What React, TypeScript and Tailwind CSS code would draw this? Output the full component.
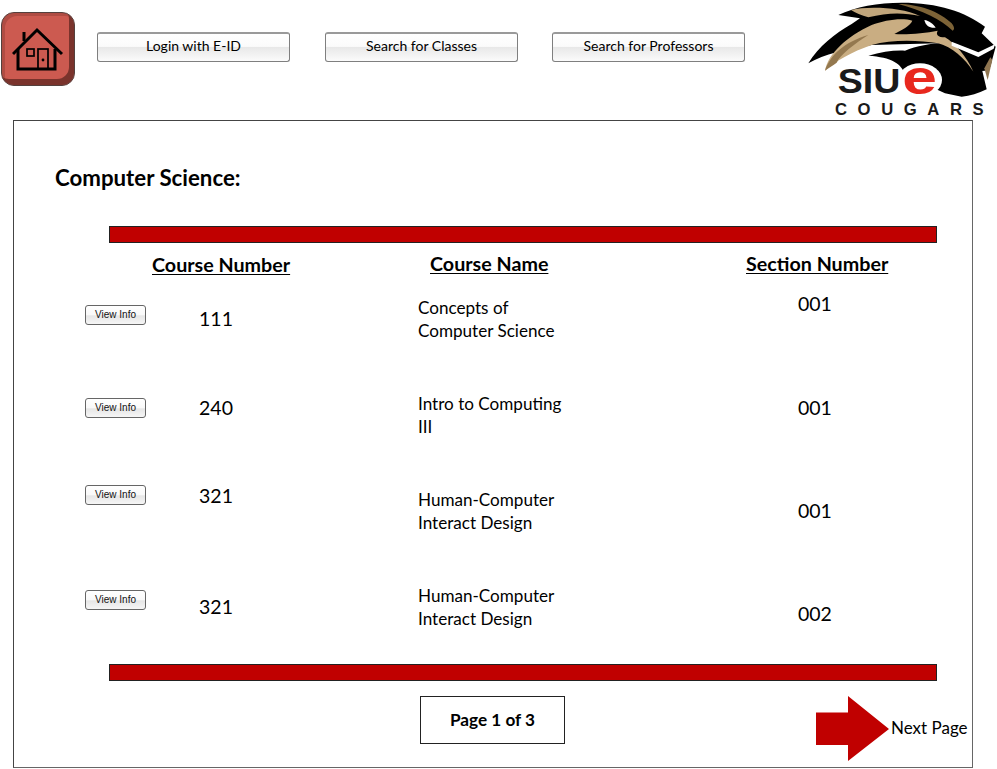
const font = { fontFamily: '"Lato", "Open Sans", sans-serif' };

function Chrome({ label, className = '' }: { label: string; className?: string }) {
  return (
    <button className={`w-[193px] h-[30px] shrink-0 rounded-[3px] border border-[#7f7f7f] border-t-2 border-t-[#9a9a9a] bg-[linear-gradient(#ffffff_0%,#fbfbfb_46%,#e8e8e8_50%,#fbfbfb_100%)] text-[14px] leading-[24px] pb-[4px] text-black ${className}`}>
      {label}
    </button>
  );
}

function HomeButton() {
  return (
    <div className="ml-px mt-3 w-[74px] h-[74px] shrink-0 rounded-[13px] border border-[#54403d] bg-[#cc5a50] shadow-[inset_-5px_-6px_0_#7a332c,inset_3px_3px_0_#b04c43]">
      <svg width="52" height="46" viewBox="0 0 52 46" fill="none" stroke="#000" className="block ml-[10px] mt-[13px]">
        <path d="M1 28 L25 4 L50 28" strokeWidth="3" />
        <path d="M6 23 V43 H43 V23" strokeWidth="3" />
        <path d="M12 15 V6" strokeWidth="3" />
        <rect x="15" y="23" width="7" height="7" strokeWidth="1.7" />
        <rect x="26" y="23" width="10" height="20" strokeWidth="1.7" />
        <circle cx="31" cy="34" r="1.4" fill="#000" stroke="none" />
      </svg>
    </div>
  );
}

function Logo() {
  return (
    <svg width="192" height="120" viewBox="0 0 576 360" className="ml-auto shrink-0">
      <path d="M10 190 C40 140 90 100 140 72 L165 55 L100 45 C150 20 220 8 290 8 C400 8 480 35 540 80 L530 100 L572 140 L556 200 L540 212 L500 215 C470 170 440 130 400 130 L200 135 C120 150 60 160 10 190 Z" fill="#000" />
      <path d="M190 167 C230 155 270 150 300 152 C340 135 400 125 440 130 L500 200 L530 205 L545 268 C520 280 495 288 470 290 L420 280 L300 225 C290 190 260 172 190 167 Z" fill="#000" />
      <path d="M138 30 C190 18 290 22 345 48 C300 38 250 36 190 52 C170 46 150 38 138 30 Z" fill="#c1a67c" />
      <path d="M280 12 C340 12 405 35 440 70 C450 82 448 90 443 92 C410 60 350 30 280 12 Z" fill="#7d6337" />
      <path d="M60 212 C70 160 125 110 200 75 C240 60 290 52 322 62 C315 78 290 90 268 102 C310 104 360 100 398 92 C392 104 398 112 420 112 C450 130 485 170 505 215 C480 175 440 140 400 130 C340 120 260 118 200 135 C140 155 90 185 60 212 Z" fill="#c9ad82" />
      <path d="M60 212 C75 165 120 125 190 105 C150 130 105 165 95 188 C85 195 70 205 60 212 Z" fill="#94784f" />
      <path d="M358 60 C372 62 385 72 392 83 C375 85 362 78 358 60 Z" fill="#fff" />
      <path d="M440 125 L520 157 L570 133 L566 146 L520 171 L440 137 Z" fill="#fff" />
      <path d="M556 172 L562 180 L548 240 L538 205 Z" fill="#8f7550" />
      <ellipse cx="345" cy="240" rx="66" ry="50" fill="#fff" />
      <text x="98" y="280" fontFamily="'Liberation Sans', sans-serif" fontWeight="700" fontSize="106" textLength="188" lengthAdjust="spacingAndGlyphs" fill="#1a1a1a">SIU</text>
      <text x="292" y="282" fontFamily="'Liberation Sans', sans-serif" fontWeight="700" fontSize="142" textLength="104" lengthAdjust="spacingAndGlyphs" fill="#e8281e">e</text>
      <text x="90" y="345" fontFamily="'Liberation Sans', sans-serif" fontWeight="700" fontSize="50" textLength="446" fill="#1a1a1a">COUGARS</text>
    </svg>
  );
}

function ViewInfo({ className }: { className: string }) {
  return (
    <button className={`w-[61px] h-[20px] rounded-[3px] border border-[#666] bg-[linear-gradient(#ffffff_0%,#f9f9f9_48%,#e6e6e6_55%,#f6f6f6_100%)] text-[10px] leading-[15px] pb-[1px] text-[#111] ${className}`} style={{ fontFamily: '"Liberation Sans", sans-serif' }}>
      View Info
    </button>
  );
}

const rows = [
  { h: 'h-[93px]', n: '111', l1: 'Concepts of', l2: 'Computer Science', s: '001', bt: 'mt-[12px]', nt: 'mt-[14px]', lt: 'mt-[4px]', st: '-mt-[1px]' },
  { h: 'h-[87px]', n: '240', l1: 'Intro to Computing', l2: 'III', s: '001', bt: 'mt-[12px]', nt: 'mt-[10px]', lt: 'mt-[7px]', st: 'mt-[10px]' },
  { h: 'h-[105px]', n: '321', l1: 'Human-Computer', l2: 'Interact Design', s: '001', bt: 'mt-[12px]', nt: 'mt-[11px]', lt: 'mt-[16px]', st: 'mt-[26px]' },
  { h: 'h-[86px]', n: '321', l1: 'Human-Computer', l2: 'Interact Design', s: '002', bt: 'mt-[12px]', nt: 'mt-[17px]', lt: 'mt-[7px]', st: 'mt-[24px]' },
];

export default function App() {
  return (
    <div className="w-[997px] h-[769px] bg-white overflow-hidden text-black" style={font}>
      <header className="flex items-start h-[120px]">
        <HomeButton />
        <div className="flex ml-[22px] mt-[32px]">
          <Chrome label="Login with E-ID" />
          <Chrome label="Search for Classes" className="ml-[35px]" />
          <Chrome label="Search for Professors" className="ml-[34px]" />
        </div>
        <Logo />
      </header>
      <main className="ml-[13px] w-[960px] h-[648px] border border-[#444] border-r-[#666] border-b-[#666] flex flex-col">
        <h1 className="ml-[41px] mt-[43px] h-[28px] text-[22.25px] leading-[28px] font-bold">Computer Science:</h1>
        <div className="ml-[95px] mt-[34px] w-[828px] h-[17px] bg-[#c00000] border border-[#222]" />
        <div className="grid grid-cols-[305px_293px_1fr] ml-[71px] mt-[9px] h-[41px] text-[19.7px] leading-[24px] font-bold">
          <div className="ml-[67px] mt-[1px] underline underline-offset-2">Course Number</div>
          <div className="ml-[40px] underline underline-offset-2">Course Name</div>
          <div className="ml-[63px] underline underline-offset-2">Section Number</div>
        </div>
        {rows.map((r, i) => (
          <div key={i} className={`grid grid-cols-[104px_229px_380px_60px] ml-[71px] items-start ${r.h}`}>
            <ViewInfo className={r.bt} />
            <div className={`text-[19.5px] leading-[24px] text-center w-[52px] ml-[1px] ${r.nt}`}>{r.n}</div>
            <div className={`text-[17.1px] leading-[22.5px] ${r.lt}`}>
              <div>{r.l1}</div>
              <div>{r.l2}</div>
            </div>
            <div className={`text-[19.5px] leading-[24px] ${r.st}`}>{r.s}</div>
          </div>
        ))}
        <div className="ml-[95px] w-[828px] h-[17px] bg-[#c00000] border border-[#222]" />
        <div className="flex items-start mt-[15px] ml-[406px]">
          <div className="w-[145px] h-[48px] shrink-0 border border-[#222] flex items-center justify-center pb-[1px] text-[17.2px] font-bold">Page 1 of 3</div>
          <svg width="74" height="66" viewBox="0 0 74 66" className="ml-[251px] shrink-0">
            <polygon points="0,16.5 32,16.5 32,0 73,33 32,65 32,49 0,49" fill="#c00000" />
          </svg>
          <span className="ml-[1px] mt-[20px] text-[17px] leading-[24px] whitespace-nowrap">Next Page</span>
        </div>
      </main>
    </div>
  );
}
